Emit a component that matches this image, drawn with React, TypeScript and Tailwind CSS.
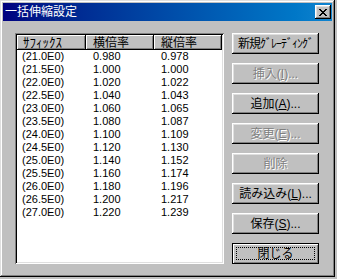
// 一括伸縮設定ダイアログ（Win98 風）

const rows = [
  ['(21.0E0)', '0.980', '0.978'],
  ['(21.5E0)', '1.000', '1.000'],
  ['(22.0E0)', '1.020', '1.022'],
  ['(22.5E0)', '1.040', '1.043'],
  ['(23.0E0)', '1.060', '1.065'],
  ['(23.5E0)', '1.080', '1.087'],
  ['(24.0E0)', '1.100', '1.109'],
  ['(24.5E0)', '1.120', '1.130'],
  ['(25.0E0)', '1.140', '1.152'],
  ['(25.5E0)', '1.160', '1.174'],
  ['(26.0E0)', '1.180', '1.196'],
  ['(26.5E0)', '1.200', '1.217'],
  ['(27.0E0)', '1.220', '1.239'],
]

const raised =
  'shadow-[inset_-1px_-1px_#000,inset_1px_1px_#fff,inset_-2px_-2px_#808080,inset_2px_2px_#dfdfdf]'

function Btn({
  children,
  disabled,
}: {
  children: React.ReactNode
  disabled?: boolean
}) {
  return (
    <div
      className={`w-[87px] h-[21px] bg-[#c0c0c0] flex items-center justify-center text-[12px] leading-none ${raised} ${
        disabled ? 'text-[#808080] [text-shadow:1px_1px_0_#fff]' : 'text-black'
      }`}
    >
      {children}
    </div>
  )
}

export default function App() {
  return (
    <div className="w-[337px] h-[279px] bg-[#c0c0c0] font-['Liberation_Sans','Noto_Sans_CJK_JP',sans-serif]">
      <div className="w-[335px] h-[277px] p-[3px] flex flex-col shadow-[inset_-1px_-1px_#000,inset_1px_1px_#dfdfdf,inset_-2px_-2px_#808080,inset_2px_2px_#fff]">
        {/* タイトルバー */}
        <div className="h-[18px] flex items-center justify-between pl-[2px] pr-[1px] bg-gradient-to-r from-[#000080] to-[#1084d0]">
          <span className="text-white text-[12px] leading-none">一括伸縮設定</span>
          <div className={`w-[16px] h-[14px] bg-[#c0c0c0] flex items-center justify-center ${raised}`}>
            <svg width="8" height="7" viewBox="0 0 8 7" shapeRendering="crispEdges">
              <path
                d="M0 0h2v1H0zM6 0h2v1H6zM1 1h2v1H1zM5 1h2v1H5zM2 2h4v1H2zM3 3h2v1H3zM2 4h4v1H2zM1 5h2v1H1zM5 5h2v1H5zM0 6h2v1H0zM6 6h2v1H6z"
                fill="#000"
              />
            </svg>
          </div>
        </div>

        {/* 本体 */}
        <div className="flex pt-[12px] pl-[12px] gap-[8px]">
          {/* 一覧 */}
          <div className="w-[209px] h-[231px] p-[2px] bg-white shadow-[inset_1px_1px_#808080,inset_-1px_-1px_#fff,inset_2px_2px_#000,inset_-2px_-2px_#dfdfdf]">
            <div className="flex h-[15px] leading-none">
              <div className="w-[69px] h-full bg-[#c0c0c0] flex items-center pl-[6px] text-[13px] shadow-[inset_-1px_-1px_#000,inset_1px_1px_#fff,inset_-2px_-2px_#808080]">
                ｻﾌｨｯｸｽ
              </div>
              <div className="w-[68px] h-full bg-[#c0c0c0] flex items-center pl-[7px] text-[12px] shadow-[inset_-1px_-1px_#000,inset_1px_1px_#fff,inset_-2px_-2px_#808080]">
                横倍率
              </div>
              <div className="w-[68px] h-full bg-[#c0c0c0] flex items-center pl-[7px] text-[12px] shadow-[inset_-1px_-1px_#000,inset_1px_1px_#fff,inset_-2px_-2px_#808080]">
                縦倍率
              </div>
            </div>
            {rows.map((r) => (
              <div key={r[0]} className="flex h-[13px] items-center text-[11px] leading-none text-black">
                <div className="w-[69px] pl-[5px]">{r[0]}</div>
                <div className="w-[68px] pl-[7px]">{r[1]}</div>
                <div className="w-[68px] pl-[7px]">{r[2]}</div>
              </div>
            ))}
          </div>

          {/* ボタン */}
          <div className="flex flex-col gap-[9px]">
            <Btn>
              <span className="tracking-[-1px]">新規ｸﾞﾚｰﾃﾞｨﾝｸﾞ</span>
            </Btn>
            <Btn disabled>
              挿入(<span className="underline">I</span>)...
            </Btn>
            <Btn>
              追加(<span className="underline">A</span>)...
            </Btn>
            <Btn disabled>
              変更(<span className="underline">E</span>)...
            </Btn>
            <Btn disabled>削除</Btn>
            <Btn>
              読み込み(<span className="underline">L</span>)...
            </Btn>
            <Btn>
              保存(<span className="underline">S</span>)...
            </Btn>
            <div className="w-[87px] h-[21px] border border-black">
              <div className="w-full h-full bg-[#c0c0c0] p-[3px] shadow-[inset_1px_1px_#fff,inset_-1px_-1px_#808080]">
                <div className="w-full h-full border border-dotted border-black flex items-center justify-center text-[12px] leading-none">
                  閉じる
                </div>
              </div>
            </div>
          </div>
        </div>
      </div>
    </div>
  )
}
